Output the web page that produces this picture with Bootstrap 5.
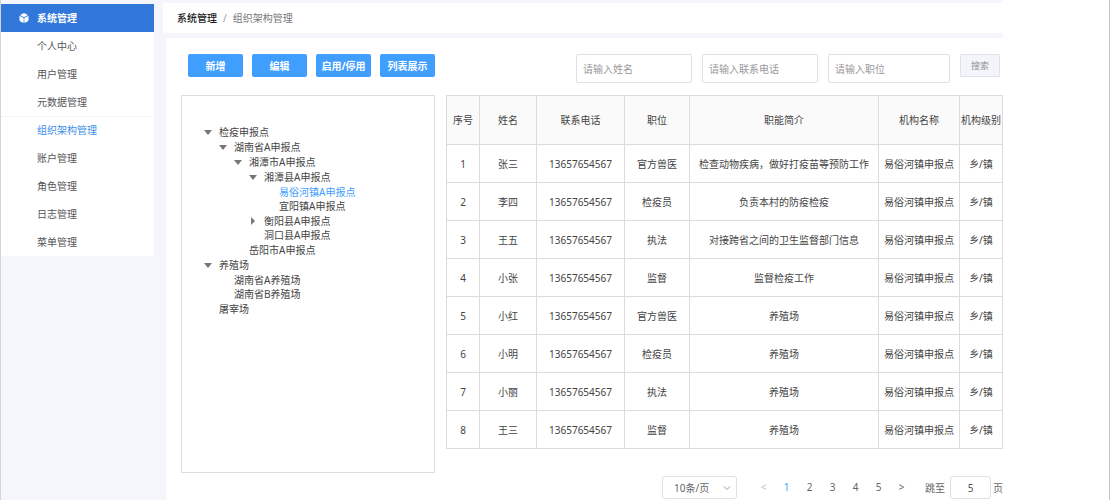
<!DOCTYPE html>
<html lang="zh-CN">
<head>
<meta charset="utf-8">
<meta name="viewport" content="width=device-width, initial-scale=1">
<title>组织架构管理</title>
<link href="https://cdn.jsdelivr.net/npm/bootstrap@5.3.0/dist/css/bootstrap.min.css" rel="stylesheet">
<style>
  body { font: 10px/14px "Noto Sans", "Noto Sans CJK SC", sans-serif; color: #555; background: #fff; }
  .frame { border-left: 1px solid #d4d4d8; border-right: 1px solid #c4c4c4; }
  .shell { background: #f5f6fb; margin-right: 106px; padding-top: 3px; }
  .side { width: 153px; margin-right: 9px; padding-top: 1px; }
  .side-title { height: 28px; padding-left: 18px; gap: 8px; background: #3278da; color: #fff; font-size: 10px; font-weight: 700; }
  .side-title svg { width: 10px; height: 10px; }
  .side-link { display: flex; align-items: center; height: 28px; padding: 0 0 0 36px; color: #555; text-decoration: none; }
  .side-link.active { color: #3a8ee6; box-shadow: inset 0 1px #f6f6f9; }
  .crumbs { height: 30px; padding-left: 14px; background: #fff; margin: 0; --bs-breadcrumb-item-padding-x: 6px; --bs-breadcrumb-divider-color: #999; }
  .crumbs .breadcrumb-item { color: #777; }
  .crumbs .breadcrumb-item:first-child { color: #222; font-weight: 500; }
  .panel { margin: 5px 0 0 3px; padding: 16px 0 0 15px; background: #fff; }
  .tools { height: 41px; padding: 0 3px 0 7px; }
  .tool-group { gap: 9px; }
  .find-group { gap: 10px; }
  .tool-btn { width: 55px; height: 23px; padding: 0; border: 0; border-radius: 2px; background: #409eff; font-size: 10px; line-height: 14px; font-weight: 700; }
  .find-box { width: 116px; height: 29px; padding: 0 6px; border: 1px solid #dfe0e3; border-radius: 2px; font-size: 10px; color: #555; }
  .find-box.wide { width: 122px; }
  .find-box::placeholder { color: #999; }
  .find-btn { width: 40px; height: 23px; padding: 0; border: 1px solid #dde2ec; border-radius: 1px; background: #f3f5fa; color: #8f9299; font-size: 9px; line-height: 14px; }
  .tree-box { width: 254px; height: 378px; padding: 29px 22px; border: 1px solid #dedede; }
  .tree, .tree ul { list-style: none; padding: 0; margin: 0; }
  .tree ul { margin: 1px 0; padding-left: 15px; }
  .node { display: flex; align-items: center; height: 14px; padding-left: 15px; color: #444; white-space: nowrap; }
  .node.has-kids { padding-left: 0; }
  .node.picked { color: #409eff; }
  .twisty { display: flex; align-items: center; width: 15px; height: 14px; padding: 0; border: 0; background: none; }
  .twisty svg { width: 8px; height: 8px; fill: #777; }
  .data { min-width: 0; margin-left: 11px; }
  .staff { table-layout: fixed; width: 100%; margin: 0; text-align: center; color: #444; border-collapse: collapse; }
  .staff th, .staff td { height: 38px; padding: 0; border: 1px solid #dcdcdc; vertical-align: middle; font-weight: 400; white-space: nowrap; }
  .staff th { height: 49px; background: #fafafa; }
  .w-no { width: 33px; } .w-name { width: 57px; } .w-tel { width: 88px; } .w-job { width: 65px; } .w-org { width: 81px; } .w-level { width: 43px; }
  .pager { margin-top: 27px; color: #666; }
  .size-pick { width: 75px; height: 23px; padding: 0 20px 0 11px; border: 1px solid #dfe0e3; border-radius: 3px; font-size: 10px; line-height: 14px; color: #666; background-position: right 5px center; background-size: 8px 8px;
    background-image: url("data:image/svg+xml,%3csvg xmlns='http://www.w3.org/2000/svg' viewBox='0 0 16 16'%3e%3cpath fill='none' stroke='%23999' stroke-width='2' d='M2 5l6 6 6-6'/%3e%3c/svg%3e"); }
  .pages { margin: 0 12px 0 15px; --bs-pagination-font-size: 10px; }
  .pages .page-item .page-link { width: 23px; height: 23px; margin: 0; padding: 0; border: 0; background: none; color: #666; text-align: center; line-height: 23px; }
  .pages .page-item.active .page-link { color: #409eff; }
  .pages .page-item.disabled .page-link { color: #c0c4cc; }
  .jump-box { width: 41px; height: 23px; margin: 0 2px 0 5px; padding: 0; border: 1px solid #dfe0e3; border-radius: 3px; font-size: 10px; color: #555; text-align: center; }
</style>
</head>
<body>
<div class="frame min-vh-100 d-flex">
  <div class="shell d-flex flex-grow-1">
    <nav class="side flex-shrink-0">
      <h1 class="side-title d-flex align-items-center m-0">
        <svg viewBox="0 0 20 20" aria-hidden="true"><path fill="#fff" d="M10 0l8 4-8 4.500-8-4.500zM1 5.500l8.300 4.700V20L3 16.800Q1 15.800 1 14zM19 5.500l-8.300 4.700V20L17 16.800Q19 15.800 19 14z"/></svg>
        系统管理
      </h1>
      <div class="bg-white">
        <a class="side-link" href="#">个人中心</a>
        <a class="side-link" href="#">用户管理</a>
        <a class="side-link" href="#">元数据管理</a>
        <a class="side-link active" href="#" aria-current="page">组织架构管理</a>
        <a class="side-link" href="#">账户管理</a>
        <a class="side-link" href="#">角色管理</a>
        <a class="side-link" href="#">日志管理</a>
        <a class="side-link" href="#">菜单管理</a>
      </div>
    </nav>

    <main class="flex-grow-1 d-flex flex-column">
      <ol class="breadcrumb crumbs align-items-center">
        <li class="breadcrumb-item">系统管理</li>
        <li class="breadcrumb-item" aria-current="page">组织架构管理</li>
      </ol>

      <section class="panel flex-grow-1">
        <div class="tools d-flex justify-content-between align-items-start">
          <div class="tool-group d-flex">
            <button type="button" class="btn btn-primary tool-btn">新增</button>
            <button type="button" class="btn btn-primary tool-btn">编辑</button>
            <button type="button" class="btn btn-primary tool-btn">启用/停用</button>
            <button type="button" class="btn btn-primary tool-btn">列表展示</button>
          </div>
          <form class="find-group d-flex align-items-start">
            <input type="text" class="form-control find-box" placeholder="请输入姓名" aria-label="姓名">
            <input type="text" class="form-control find-box" placeholder="请输入联系电话" aria-label="联系电话">
            <input type="text" class="form-control find-box wide" placeholder="请输入职位" aria-label="职位">
            <button type="button" class="btn find-btn">搜索</button>
          </form>
        </div>

        <div class="d-flex align-items-start">
          <div class="tree-box flex-shrink-0">
            <ul class="tree">
              <li><div class="node has-kids"><button type="button" class="twisty" aria-label="收起"><svg viewBox="0 0 8 8"><path d="M0 2h8L4 7z"/></svg></button>检疫申报点</div>
                <ul>
                  <li><div class="node has-kids"><button type="button" class="twisty" aria-label="收起"><svg viewBox="0 0 8 8"><path d="M0 2h8L4 7z"/></svg></button>湖南省A申报点</div>
                    <ul>
                      <li><div class="node has-kids"><button type="button" class="twisty" aria-label="收起"><svg viewBox="0 0 8 8"><path d="M0 2h8L4 7z"/></svg></button>湘潭市A申报点</div>
                        <ul>
                          <li><div class="node has-kids"><button type="button" class="twisty" aria-label="收起"><svg viewBox="0 0 8 8"><path d="M0 2h8L4 7z"/></svg></button>湘潭县A申报点</div>
                            <ul>
                              <li><div class="node picked">易俗河镇A申报点</div></li>
                              <li><div class="node">宜阳镇A申报点</div></li>
                            </ul>
                          </li>
                          <li><div class="node has-kids"><button type="button" class="twisty" aria-label="展开"><svg viewBox="0 0 8 8"><path d="M2 0v8l4-4z"/></svg></button>衡阳县A申报点</div></li>
                          <li><div class="node">洞口县A申报点</div></li>
                        </ul>
                      </li>
                      <li><div class="node">岳阳市A申报点</div></li>
                    </ul>
                  </li>
                </ul>
              </li>
              <li><div class="node has-kids"><button type="button" class="twisty" aria-label="收起"><svg viewBox="0 0 8 8"><path d="M0 2h8L4 7z"/></svg></button>养殖场</div>
                <ul>
                  <li><div class="node">湖南省A养殖场</div></li>
                  <li><div class="node">湖南省B养殖场</div></li>
                </ul>
              </li>
              <li><div class="node">屠宰场</div></li>
            </ul>
          </div>

          <div class="data flex-grow-1">
            <table class="staff">
              <colgroup><col class="w-no"><col class="w-name"><col class="w-tel"><col class="w-job"><col><col class="w-org"><col class="w-level"></colgroup>
              <thead>
                <tr><th>序号</th><th>姓名</th><th>联系电话</th><th>职位</th><th>职能简介</th><th>机构名称</th><th>机构级别</th></tr>
              </thead>
              <tbody>
                <tr><td>1</td><td>张三</td><td>13657654567</td><td>官方兽医</td><td>检查动物疾病，做好打疫苗等预防工作</td><td>易俗河镇申报点</td><td>乡/镇</td></tr>
                <tr><td>2</td><td>李四</td><td>13657654567</td><td>检疫员</td><td>负责本村的防疫检疫</td><td>易俗河镇申报点</td><td>乡/镇</td></tr>
                <tr><td>3</td><td>王五</td><td>13657654567</td><td>执法</td><td>对接跨省之间的卫生监督部门信息</td><td>易俗河镇申报点</td><td>乡/镇</td></tr>
                <tr><td>4</td><td>小张</td><td>13657654567</td><td>监督</td><td>监督检疫工作</td><td>易俗河镇申报点</td><td>乡/镇</td></tr>
                <tr><td>5</td><td>小红</td><td>13657654567</td><td>官方兽医</td><td>养殖场</td><td>易俗河镇申报点</td><td>乡/镇</td></tr>
                <tr><td>6</td><td>小明</td><td>13657654567</td><td>检疫员</td><td>养殖场</td><td>易俗河镇申报点</td><td>乡/镇</td></tr>
                <tr><td>7</td><td>小丽</td><td>13657654567</td><td>执法</td><td>养殖场</td><td>易俗河镇申报点</td><td>乡/镇</td></tr>
                <tr><td>8</td><td>王三</td><td>13657654567</td><td>监督</td><td>养殖场</td><td>易俗河镇申报点</td><td>乡/镇</td></tr>
              </tbody>
            </table>

            <div class="pager d-flex justify-content-end align-items-center">
              <select class="form-select size-pick" aria-label="每页条数"><option>10条/页</option><option>20条/页</option></select>
              <ul class="pagination pages">
                <li class="page-item disabled"><a class="page-link" href="#" aria-label="上一页">&lt;</a></li>
                <li class="page-item active"><a class="page-link" href="#">1</a></li>
                <li class="page-item"><a class="page-link" href="#">2</a></li>
                <li class="page-item"><a class="page-link" href="#">3</a></li>
                <li class="page-item"><a class="page-link" href="#">4</a></li>
                <li class="page-item"><a class="page-link" href="#">5</a></li>
                <li class="page-item"><a class="page-link" href="#" aria-label="下一页">&gt;</a></li>
              </ul>
              <label for="jump">跳至</label>
              <input id="jump" type="text" class="form-control jump-box" value="5">
              <span>页</span>
            </div>
          </div>
        </div>
      </section>
    </main>
  </div>
</div>
<script src="https://cdn.jsdelivr.net/npm/bootstrap@5.3.0/dist/js/bootstrap.bundle.min.js"></script>
</body>
</html>
